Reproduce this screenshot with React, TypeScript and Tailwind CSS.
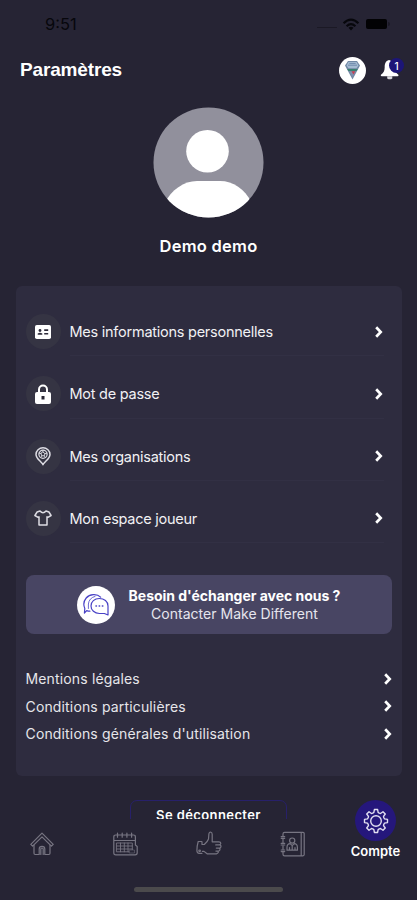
import type { ReactNode } from 'react';

const stroke = { fill: 'none', stroke: 'currentColor', strokeLinecap: 'round', strokeLinejoin: 'round' } as const;

function Chevron() {
  return (
    <svg width="10" height="12" viewBox="0 0 10 12" className="shrink-0 text-white" {...stroke} strokeWidth="2.7" strokeLinecap="butt" strokeLinejoin="miter">
      <path d="M2.2 1.3 6.7 6 2.2 10.7" />
    </svg>
  );
}

function StatusBar() {
  return (
    <div className="flex h-12 shrink-0 items-center justify-between pl-[45px] pr-[27px] text-[#07070c]">
      <span className="text-[16.5px] leading-none">9:51</span>
      <div className="flex items-center">
        <span className="mr-[5px] mt-[6px] h-px w-5 bg-[#1b1925]" />
        <svg width="18" height="13" viewBox="0 0 18 13" {...stroke} strokeLinecap="butt" strokeWidth="2.2">
          <path d="M1.6 5.2Q9-1.8 16.4 5.2" />
          <path d="M4.6 8.2Q9 4.1 13.4 8.2" />
          <path d="M9 12.4 6.5 9.8Q9 7.7 11.5 9.8Z" fill="currentColor" stroke="none" />
        </svg>
        <span className="ml-[6px] h-[10px] w-[21px] rounded-[2px] bg-[#020204]" />
        <span className="ml-px h-1 w-[2px] rounded-r bg-[#1b1925]" />
      </div>
    </div>
  );
}

function Header() {
  return (
    <header className="flex h-11 shrink-0 items-center justify-between pl-5 pr-3">
      <h1 className="-mt-[2px] font-['Liberation_Sans',Arial,sans-serif] text-[19px] font-bold leading-none tracking-[-0.15px] text-white">Paramètres</h1>
      <div className="flex items-center gap-[15px]">
        <span className="flex size-[27px] items-center justify-center rounded-full bg-white">
          <svg width="17" height="20" viewBox="0 0 17 20">
            <path d="M4 1h9l3 4.5L8.5 19.5 1 5.5Z" fill="#7188a5" />
            <path d="M4.5 2h8l2 3.5-2 2.8h-8l-2-2.8Z" fill="#a5bbd2" />
            <path d="M4 5.2h9M5.3 3.4h6.4" stroke="#617da2" strokeWidth=".8" />
            <path d="M3.2 9h10.6l-1.2 2H4.4Z" fill="#388070" />
            <path d="M5.2 11.5h6.6L8.5 17Z" fill="#808fae" />
            <path d="M7.5 11.2h3.8L9.5 14.4Z" fill="#c63e50" />
          </svg>
        </span>
        <span className="relative h-6 w-6">
          <svg width="20" height="21" viewBox="0 0 20 21" className="-ml-[1px] mt-[2px]">
            <path d="M9 0C5.5 1 4.7 3.7 4.7 7.2c0 4-1.3 5.8-3.5 7.3-.8.6-.5 1.8.6 1.8h15.8c1 0 1.3-1.2.5-1.8-2.1-1.5-3.2-3.3-3.2-7.3C14.9 3.6 13 1 9 0Z" fill="#fff" />
            <path d="M7.2 16.3h5.1v2.1q-2.5 1.7-5.1 0Z" fill="#d9d8dd" />
          </svg>
          <span className="absolute left-[8px] top-0 flex size-[15px] items-center justify-center rounded-full bg-[#1c1577] text-[10px] font-medium leading-none text-white">1</span>
        </span>
      </div>
    </header>
  );
}

function Avatar() {
  return (
    <svg width="111" height="111" viewBox="0 0 111 111" className="mt-[15px] shrink-0">
      <defs>
        <clipPath id="avatar"><circle cx="55.5" cy="55.5" r="55" /></clipPath>
      </defs>
      <circle cx="55.5" cy="55.5" r="55" fill="#91909c" />
      <g clipPath="url(#avatar)" fill="#fff">
        <circle cx="54.5" cy="44.2" r="21.3" />
        <path d="M12 96C18 83 31 74 44 74h23c13 0 25 8 31 21v16H12Z" />
      </g>
    </svg>
  );
}

const icons: Record<string, ReactNode> = {
  card: (
    <svg width="16" height="14" viewBox="0 0 16 14">
      <rect width="16" height="14" rx="1.8" fill="#fff" />
      <g fill="#2e2c3b">
        <circle cx="5" cy="5.5" r="1.4" />
        <path d="M2.7 9.7V8.6q2.3-1.8 4.6 0v1.1Z" />
        <path d="M9.2 4.3h4v1.6h-4ZM9.2 7.9h4v1.6h-4Z" />
      </g>
    </svg>
  ),
  lock: (
    <svg width="16" height="20" viewBox="0 0 16 20">
      <path d="M4 9V5.5a4 4 0 0 1 8 0V9" fill="none" stroke="#fff" strokeWidth="2" />
      <rect y="8" width="16" height="12" rx="2" fill="#fff" />
      <path d="M6.5 12h3v3.5h-3Z" fill="#292735" />
    </svg>
  ),
  pin: (
    <svg width="16" height="19" viewBox="0 0 16 19" className="text-[#dddce3]" {...stroke} strokeWidth="1.5">
      <path d="M8 17.8C6.5 14.5 1 11.8 1 7.4a7 6.6 0 0 1 14 0c0 4.4-5.5 7.1-7 10.4Z" />
      <circle cx="8" cy="7.3" r="4.1" strokeWidth="1.2" />
      <path d="m8 5.1 2 1.5-.7 2.2H6.7L6 6.6ZM8 3.2v1.9M4.2 6.2l1.8.4M11.8 6.2l-1.8.4M5.8 10.5l.9-1.7M10.2 10.5l-.9-1.7" strokeWidth=".9" />
    </svg>
  ),
  shirt: (
    <svg width="18" height="16" viewBox="0 0 18 16" className="text-[#dddce3]" {...stroke} strokeWidth="1.5">
      <path d="M6 1 3.1 2 .9 5.5l3.2 1.8.9-.5V15h8V6.8l.9.5 3.2-1.8L14.9 2 12 1Q9 4.5 6 1Z" />
    </svg>
  ),
};

const rows = [
  { icon: 'card', label: 'Mes informations personnelles' },
  { icon: 'lock', label: 'Mot de passe' },
  { icon: 'pin', label: 'Mes organisations' },
  { icon: 'shirt', label: 'Mon espace joueur' },
];

function MenuRow({ icon, label }: (typeof rows)[number]) {
  return (
    <div className="flex h-[62.3px] pr-2">
      <div className="flex w-11 shrink-0 pt-5">
        <span className="flex size-[35px] items-center justify-center rounded-full bg-[#353443]">{icons[icon]}</span>
      </div>
      <div className="flex flex-1 items-start justify-between border-b border-[#323044] pt-5">
        <span className="whitespace-nowrap text-[14.5px] leading-[35px] tracking-[-0.25px] text-[#f1f1f4]">{label}</span>
        <span className="flex h-[35px] items-center"><Chevron /></span>
      </div>
    </div>
  );
}

function ContactBanner() {
  return (
    <div className="mt-[32px] flex h-[59px] items-center rounded-lg bg-[#484563] pl-[51px]">
      <span className="flex size-[38px] items-center justify-center rounded-full bg-white text-[#4942c6]">
        <svg width="26" height="24" viewBox="0 0 26 24" {...stroke} strokeWidth="1.2">
          <path d="M6.9 18.2q-1.7 0-3.2-.6L1.4 20l.4-4.5C.5 12.5.7 8 3.2 5 6.6.9 14 .4 17.6 4.2" />
          <path d="M16.3 5.5c-4.8 0-8.3 3.1-8.3 7.4s3.6 7.6 8.4 7.6h5l3.6 1.5V13c0-4.5-3.8-7.5-8.7-7.5Z" />
          <path d="M5.4 15.5V11q.6-6 6.6-7.6" strokeWidth=".8" />
          <path d="M13 13h.4M16.2 13h.4M19.4 13h.4" strokeWidth="1.6" />
        </svg>
      </span>
      <div className="ml-[13px] flex w-[214px] flex-col items-center whitespace-nowrap pt-px leading-[18px]">
        <span className="text-[14px] font-bold tracking-[-0.02px] text-white">Besoin d'échanger avec nous ?</span>
        <span className="text-[14px] tracking-[0.02px] text-[#e6e5ee]">Contacter Make Different</span>
      </div>
    </div>
  );
}

const links = ['Mentions légales', 'Conditions particulières', "Conditions générales d'utilisation"];

const gear = Array.from({ length: 8 }, (_, i) => {
  const at = (r: number, deg: number) => {
    const a = ((i * 45 + deg - 90) * Math.PI) / 180;
    return `${(13 + r * Math.cos(a)).toFixed(2)} ${(13 + r * Math.sin(a)).toFixed(2)}`;
  };
  return `${i ? 'L' : 'M'}${at(8.8, -14)}L${at(11.6, -8)}L${at(11.6, 8)}L${at(8.8, 14)}L${at(8.5, 22.5)}`;
}).join('') + 'Z';

function BottomNav() {
  return (
    <nav className="relative flex h-[81px] shrink-0 flex-col bg-[#262434]">
      <div className="flex h-[49px] items-center pl-[30px] text-[#777582]">
        <svg width="24" height="24" viewBox="0 0 24 24" {...stroke} strokeWidth="1.2">
          <path d="M.8 12.4 12 1.2l11.2 11.2-1.8 1.8L12 4.8l-9.4 9.4Z" />
          <path d="M4 13v8.3q0 1.2 1.2 1.2h4V17q0-2.7 2.8-2.7t2.8 2.7v5.5h4q1.2 0 1.2-1.2V13M10.8 22.5V17q0-1 1.2-1t1.2 1v5.5" />
        </svg>
        <svg width="25" height="24" viewBox="0 0 25 24" className="ml-[59px]" {...stroke} strokeWidth="1.2">
          <path d="M22.4 13V5q0-2-2-2H2.8Q.8 3 .8 5v16q0 1.8 2 1.8h19.4q2 0 2-2V14.5L22.4 13M1 8.5h21.2M4.5 1v4.2M9.2 1v4.2M13.9 1v4.2M18.6 1v4.2" />
          <path d="M3.8 11h15.5v8.8H3.8ZM7.5 11v8.8M11.3 11v8.8M15 11v8.8M3.8 14h15.5M3.8 17h15.5" strokeWidth=".9" />
          <path d="M16.5 18h5v3h-5Z" fill="#262434" strokeWidth=".5" />
        </svg>
        <svg width="26" height="25" viewBox="0 0 26 25" className="ml-[58px]" {...stroke} strokeWidth="1.2">
          <path d="M5.9 10.5H2.2Q.9 15 .9 19.6q0 2.8 2.4 2.8h2.6M6 11v2.5h2.3q3.2-2.6 4.2-5.5l.4-5.2Q13.2 1 14.6 1q1.6.2 1.6 2.4v7.4h6.6q2 .1 2 1.5t-1.7 1.6h-3.4 4q1.5.3 1.3 1.7t-1.6 1.5h-3.1 2.5q1.4.3 1.2 1.6t-1.6 1.4h-2.5 1.7q1 .3.7 1.3T20.4 22.8h-9.3L8 20.4H6.4" />
          <circle cx="3.6" cy="19.8" r=".8" />
        </svg>
        <svg width="25" height="26" viewBox="0 0 25 26" className="ml-[58px]" {...stroke} strokeWidth="1.2">
          <path d="M3 5V3q0-1.6 1.6-1.6H23q1.2 0 1.2 1.2v21q0 1.2-1.2 1.2H4.6Q3 24.8 3 23.2V21M3 8v4M3 15v3M21.2 1.5v23M1.2 5.7h3.5M1.2 7.3h3.5M1.2 12.4h3.5M1.2 14h3.5M1.2 19h3.5M1.2 20.6h3.5" />
          <circle cx="12.2" cy="9.6" r="2.6" />
          <path d="M7 19.2v-2.8q0-3.5 3.2-3.7l2 2 2-2q3.2.2 3.2 3.7v2.8ZM12.2 14.7v4M9.5 16.5v2.5M15 16.5v2.5" />
        </svg>
      </div>
      <div className="absolute right-[15px] top-[-19px] flex w-[53px] flex-col items-center">
        <span className="flex size-[41px] items-center justify-center rounded-full bg-[#25177c] text-[#e1def1]">
          <svg width="26" height="26" viewBox="0 0 26 26" {...stroke} strokeWidth="1.4">
            <path d={gear} />
            <circle cx="13" cy="13" r="5.3" />
          </svg>
        </span>
        <span className="mt-px text-[13px] font-semibold leading-[18px] text-white">Compte</span>
      </div>
      <span className="ml-[134px] mt-[19px] h-[5px] w-[149px] rounded-full bg-[#4b4a4c]" />
    </nav>
  );
}

export default function App() {
  return (
    <div className="flex h-[900px] w-[417px] flex-col overflow-hidden bg-[#262434] font-[Inter,sans-serif]">
      <StatusBar />
      <Header />
      <main className="flex h-[727px] shrink-0 flex-col items-center overflow-hidden">
        <Avatar />
        <h2 className="mt-[18px] shrink-0 text-[16.5px] font-semibold leading-5 tracking-[0.25px] text-white">Demo demo</h2>
        <section className="mt-[30px] h-[490px] w-[386px] shrink-0 rounded-md bg-[#2e2c3f] px-[10px] pt-2">
          {rows.map((row) => <MenuRow key={row.icon} {...row} />)}
          <ContactBanner />
          <div className="-mr-[1px] mt-[31px]">
            {links.map((label) => (
              <div key={label} className="flex h-[27.4px] items-center justify-between">
                <span className="whitespace-nowrap text-[14px] tracking-[0.15px] text-[#e6e6ea]">{label}</span>
                <Chevron />
              </div>
            ))}
          </div>
        </section>
        <button className="mt-6 h-9 w-[157px] shrink-0 rounded-[7px] border border-[#27206a] pb-[5px] text-[13px] font-semibold tracking-[0.4px] text-white">Se déconnecter</button>
      </main>
      <BottomNav />
    </div>
  );
}
